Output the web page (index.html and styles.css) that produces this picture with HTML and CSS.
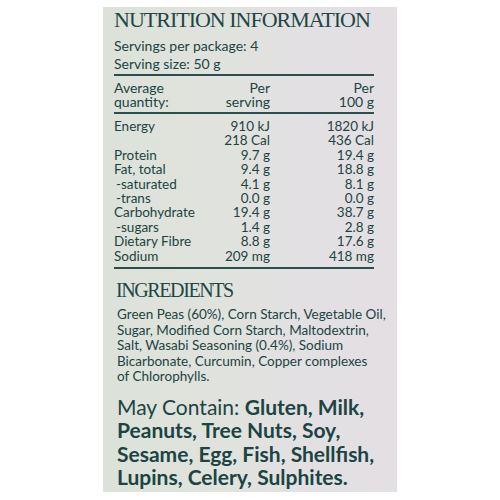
FILE: index.html
```html
<!DOCTYPE html>
<html>
<head>
<meta charset="utf-8">
<link rel="stylesheet" href="styles.css">
</head>
<body>
<div class="panel">
  <h1 class="title">NUTRITION INFORMATION</h1>
  <p class="meta first">Servings per package: 4</p>
  <p class="meta">Serving size: 50 g</p>
  <div class="table">
    <div class="head">
      <div class="lab">Average<br>quantity:</div>
      <div class="num">Per<br>serving</div>
      <div class="num">Per<br>100 g</div>
    </div>
    <div class="rows">
      <div class="lab">Energy</div><div class="num">910 kJ</div><div class="num">1820 kJ</div>
      <div class="lab"></div><div class="num">218 Cal</div><div class="num">436 Cal</div>
      <div class="lab">Protein</div><div class="num">9.7 g</div><div class="num">19.4 g</div>
      <div class="lab">Fat, total</div><div class="num">9.4 g</div><div class="num">18.8 g</div>
      <div class="lab sub">-saturated</div><div class="num">4.1 g</div><div class="num">8.1 g</div>
      <div class="lab sub">-trans</div><div class="num">0.0 g</div><div class="num">0.0 g</div>
      <div class="lab">Carbohydrate</div><div class="num">19.4 g</div><div class="num">38.7 g</div>
      <div class="lab sub">-sugars</div><div class="num">1.4 g</div><div class="num">2.8 g</div>
      <div class="lab">Dietary Fibre</div><div class="num">8.8 g</div><div class="num">17.6 g</div>
      <div class="lab">Sodium</div><div class="num">209 mg</div><div class="num">418 mg</div>
    </div>
  </div>
  <h2 class="ing-title">INGREDIENTS</h2>
  <p class="ing">Green Peas (60%), Corn Starch, Vegetable Oil,<br>Sugar, Modified Corn Starch, Maltodextrin,<br>Salt, Wasabi Seasoning (0.4%), Sodium<br>Bicarbonate, Curcumin, Copper complexes<br>of Chlorophylls.</p>
  <p class="may">May Contain: <b>Gluten, Milk,<br>Peanuts, Tree Nuts, Soy,<br>Sesame, Egg, Fish, Shellfish,<br>Lupins, Celery, Sulphites.</b></p>
</div>
</body>
</html>
```
FILE: styles.css
```css
html, body {
  margin: 0;
  padding: 0;
  background: #ffffff;
}
body {
  width: 500px;
  height: 500px;
}
.panel {
  margin: 7px 0 0 103px;
  width: 294px;
  height: 485px;
  box-sizing: border-box;
  padding: 1px 6px 0 11px;
  background: linear-gradient(90deg, #dce2da 0%, #e0e3dd 40%, #e3e0e3 70%, #e3dfe3 100%);
  color: #1b4443;
  font-family: Lato, "Open Sans", sans-serif;
  font-size: 13px;
  overflow: hidden;
}
.title {
  margin: 0;
  font-family: "Liberation Serif", serif;
  font-weight: normal;
  font-size: 22px;
  line-height: 24px;
  letter-spacing: -1px;
  white-space: nowrap;
  color: #1d4746;
}
.meta {
  margin: 0;
  font-size: 14px;
  line-height: 18px;
}
.meta.first { margin-top: 5px; }
.table {
  margin: 1px 17px 0 0;
  border-top: 2px solid #2a4f4e;
  border-bottom: 2px solid #2a4f4e;
}
.head, .rows {
  display: grid;
  grid-template-columns: 1fr 60px 104px;
}
.head {
  padding: 5px 0 3px;
  border-bottom: 2px solid #2a4f4e;
  font-size: 14px;
  line-height: 14px;
}
.rows {
  padding: 5px 0 4px;
  font-size: 13.5px;
  line-height: 14.4px;
}
.num { text-align: right; }
.sub { padding-left: 2px; }
.ing-title {
  margin: 11px 0 0 2px;
  font-family: "Liberation Serif", serif;
  font-weight: normal;
  font-size: 20px;
  line-height: 21px;
  letter-spacing: -1.4px;
  color: #1d4746;
}
.ing {
  margin: 6px 0 0 3px;
  font-size: 13.5px;
  line-height: 15.5px;
  white-space: nowrap;
}
.may {
  margin: 10px 0 0 3px;
  font-size: 21px;
  line-height: 23.5px;
  white-space: nowrap;
}
.may b { font-weight: bold; }
```
